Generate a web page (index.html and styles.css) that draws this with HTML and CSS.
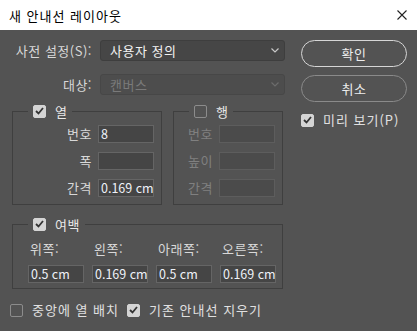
FILE: index.html
```html
<!DOCTYPE html>
<html lang="ko">
<head>
    <meta charset="UTF-8">
    <meta name="viewport" content="width=device-width, initial-scale=1.0">
    <title>새 안내선 레이아웃</title>
    <link rel="stylesheet" href="styles.css">
</head>
<body>
    <div class="titlebar">
        <span class="title">새 안내선 레이아웃</span>
        <svg class="close" width="10" height="10" viewBox="0 0 10 10">
            <path d="M0.5 0.5 L9.5 9.5 M9.5 0.5 L0.5 9.5" stroke="#222" stroke-width="1.1" fill="none"/>
        </svg>
    </div>

    <div class="dialog">
        <div class="main">
            <div class="field-row">
                <span class="label">사전 설정(S):</span>
                <div class="select">
                    <span>사용자 정의</span>
                    <svg width="8" height="5" viewBox="0 0 8 5"><path d="M0.5 0.5 L4 4 L7.5 0.5" stroke="#c8c8c8" stroke-width="1.2" fill="none"/></svg>
                </div>
            </div>
            <div class="field-row">
                <span class="label">대상:</span>
                <div class="select disabled">
                    <span>캔버스</span>
                    <svg width="8" height="5" viewBox="0 0 8 5"><path d="M0.5 0.5 L4 4 L7.5 0.5" stroke="#6c6c6c" stroke-width="1.2" fill="none"/></svg>
                </div>
            </div>

            <div class="groups">
                <fieldset class="group columns">
                    <legend>
                        <span class="check on"><svg width="9" height="8" viewBox="0 0 9 8"><path d="M1 4 L3.5 6.5 L8 1" stroke="#333" stroke-width="1.8" fill="none"/></svg></span>
                        <span class="legend-text">열</span>
                    </legend>
                    <div class="grid">
                        <span class="label">번호</span>
                        <div class="input">8</div>
                        <span class="label">폭</span>
                        <div class="input"></div>
                        <span class="label">간격</span>
                        <div class="input">0.169 cm</div>
                    </div>
                </fieldset>

                <fieldset class="group rows">
                    <legend>
                        <span class="check"></span>
                        <span class="legend-text">행</span>
                    </legend>
                    <div class="grid">
                        <span class="label disabled">번호</span>
                        <div class="input disabled"></div>
                        <span class="label disabled">높이</span>
                        <div class="input disabled"></div>
                        <span class="label disabled">간격</span>
                        <div class="input disabled"></div>
                    </div>
                </fieldset>
            </div>

            <fieldset class="group margins">
                <legend>
                    <span class="check on"><svg width="9" height="8" viewBox="0 0 9 8"><path d="M1 4 L3.5 6.5 L8 1" stroke="#333" stroke-width="1.8" fill="none"/></svg></span>
                    <span class="legend-text">여백</span>
                </legend>
                <div class="margin-grid">
                    <span class="label">위쪽:</span>
                    <span class="label">왼쪽:</span>
                    <span class="label">아래쪽:</span>
                    <span class="label">오른쪽:</span>
                    <div class="input">0.5 cm</div>
                    <div class="input">0.169 cm</div>
                    <div class="input">0.5 cm</div>
                    <div class="input">0.169 cm</div>
                </div>
            </fieldset>

            <div class="options">
                <span class="check"></span>
                <span class="option-text">중앙에 열 배치</span>
                <span class="check on"><svg width="9" height="8" viewBox="0 0 9 8"><path d="M1 4 L3.5 6.5 L8 1" stroke="#333" stroke-width="1.8" fill="none"/></svg></span>
                <span class="option-text">기존 안내선 지우기</span>
            </div>
        </div>

        <div class="actions">
            <button class="btn primary">확인</button>
            <button class="btn">취소</button>
            <div class="preview">
                <span class="check on"><svg width="9" height="8" viewBox="0 0 9 8"><path d="M1 4 L3.5 6.5 L8 1" stroke="#333" stroke-width="1.8" fill="none"/></svg></span>
                <span class="option-text">미리 보기(P)</span>
            </div>
        </div>
    </div>
</body>
</html>
```

FILE: styles.css
```css
body {
    margin: 0;
    width: 417px;
    height: 331px;
    overflow: hidden;
    font-family: "Noto Sans CJK KR", "Noto Sans", sans-serif;
    font-size: 13px;
    letter-spacing: 0.5px;
    background-color: #535353;
    color: #d8d8d8;
}
.titlebar {
    height: 30px;
    background: #fff;
    display: flex;
    align-items: center;
    justify-content: space-between;
    padding: 0 10px 0 9px;
}
.title {
    font-size: 13px;
    letter-spacing: 1px;
    color: #000;
}
.close {
    margin-top: -1px;
}
.dialog {
    display: flex;
    height: 301px;
    padding-top: 10px;
    box-sizing: border-box;
}
.main {
    width: 301px;
    display: flex;
    flex-direction: column;
}
.field-row {
    display: grid;
    grid-template-columns: 92px 185px;
    column-gap: 8px;
    align-items: center;
    height: 21px;
    margin-bottom: 13px;
    line-height: 16px;
}
.label {
    text-align: right;
    color: #d8d8d8;
    line-height: 16px;
}
.label.disabled {
    color: #808080;
}
.select {
    height: 21px;
    box-sizing: border-box;
    background: #464646;
    border: 1px solid #3e3e3e;
    border-radius: 3px;
    display: flex;
    align-items: center;
    justify-content: space-between;
    padding: 0 5px 0 9px;
    color: #f2f2f2;
}
.select.disabled {
    background: #4d4d4d;
    border-color: #474747;
    color: #7a7a7a;
}
.groups {
    display: flex;
    gap: 11px;
    margin: -5px 0 0 12px;
}
.group {
    margin: 0;
    padding: 0;
    min-width: 0;
    border: 1px solid #3f3f3f;
    box-sizing: border-box;
}
.group legend {
    display: flex;
    align-items: center;
    margin-left: 15px;
    padding: 0 5px;
    height: 16px;
}
.legend-text {
    margin-left: 9px;
    color: #e8e8e8;
}
.columns {
    width: 150px;
    height: 102px;
}
.rows {
    width: 110px;
    height: 102px;
}
.grid {
    display: grid;
    row-gap: 9px;
    align-items: center;
    padding-top: 6px;
}
.columns .grid {
    grid-template-columns: 79px 56px;
    column-gap: 6px;
}
.rows .grid {
    grid-template-columns: 26px 56px;
    column-gap: 5px;
    padding-left: 14px;
}
.rows .label {
    text-align: left;
}
.input {
    height: 18px;
    box-sizing: border-box;
    background: #454545;
    border: 1px solid #656565;
    color: #eef2f8;
    padding: 0 2px;
    font-size: 12.5px;
    letter-spacing: 0;
    line-height: 15px;
    white-space: nowrap;
    overflow: hidden;
}
.input.disabled {
    background: #4b4b4b;
    border-color: #5d5d5d;
}
.margins {
    width: 271px;
    height: 73px;
    margin: 11px 0 0 12px;
}
.margin-grid {
    display: grid;
    grid-template-columns: repeat(4, 56px);
    column-gap: 8px;
    row-gap: 8px;
    padding: 9px 0 0 15px;
}
.margin-grid .label {
    text-align: left;
    padding-left: 2px;
}
.check {
    width: 13px;
    height: 13px;
    box-sizing: border-box;
    border: 1px solid #8c8c8c;
    border-radius: 2px;
    display: inline-flex;
    align-items: center;
    justify-content: center;
    flex-shrink: 0;
}
.check.on {
    background: #d4d4d4;
    border-color: #d4d4d4;
}
.options {
    display: flex;
    align-items: center;
    margin-top: 13px;
    padding-left: 10px;
    line-height: 16px;
}
.option-text {
    margin-left: 9px;
    color: #e0e0e0;
    letter-spacing: 1px;
}
.options .check.on {
    margin-left: 8px;
}
.actions {
    display: flex;
    flex-direction: column;
    width: 106px;
}
.btn {
    height: 27px;
    margin-bottom: 8px;
    border-radius: 14px;
    background: transparent;
    border: 1px solid #8a8a8a;
    color: #ececec;
    font-family: inherit;
    font-size: 13px;
    letter-spacing: 0.5px;
    padding: 0;
}
.btn.primary {
    border: 1.5px solid #d6d6d6;
}
.preview {
    display: flex;
    align-items: center;
    margin-top: 2px;
    line-height: 16px;
}
.preview .option-text {
    margin-left: 9px;
}
```
